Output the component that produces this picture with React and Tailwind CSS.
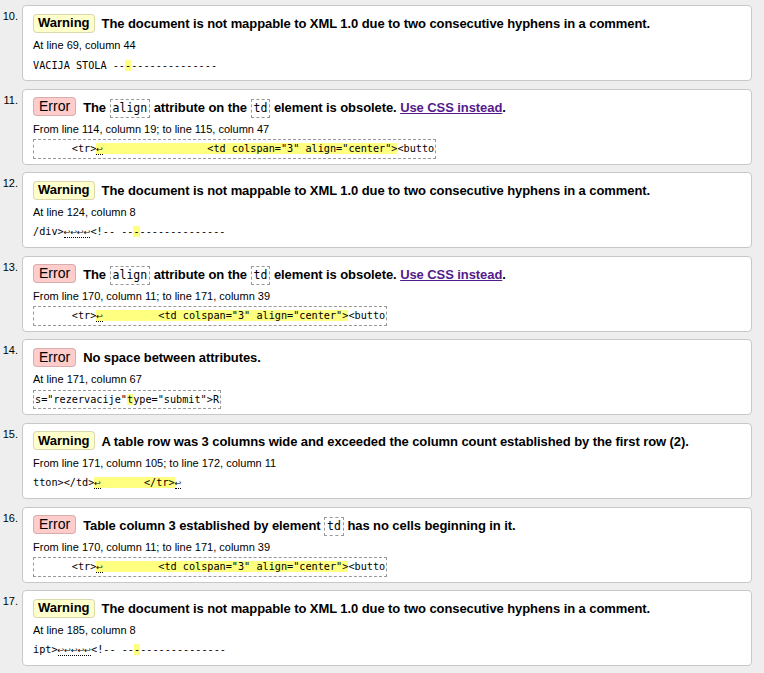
import React from 'react';

const sans = { fontFamily: '"Liberation Sans", Arial, sans-serif' };
const mono = { fontFamily: '"DejaVu Sans Mono", "Liberation Mono", monospace' };
const arrowFont = { fontFamily: '"DejaVu Sans", sans-serif' };

const xmlTitle = ['The document is not mappable to XML 1.0 due to two consecutive hyphens in a comment.'];
const alignTitle = [
  'The ',
  { code: 'align' },
  ' attribute on the ',
  { code: 'td' },
  ' element is obsolete. ',
  { link: 'Use CSS instead' },
  '.',
];
const dashes = '--------------';
const tdRow = (n) => ['      <tr>', { hl: '↩' + ' '.repeat(n) + '<td colspan="3" align="center">' }, '<butto'];

const messages = [
  { n: 10, type: 'Warning', title: xmlTitle, loc: 'At line 69, column 44', extract: ['VACIJA STOLA --', { hl: '-' }, dashes] },
  { n: 11, type: 'Error', title: alignTitle, loc: 'From line 114, column 19; to line 115, column 47', extract: tdRow(17) },
  { n: 12, type: 'Warning', title: xmlTitle, loc: 'At line 124, column 8', extract: ['/div>↩↩↩↩<!-- --', { hl: '-' }, dashes] },
  { n: 13, type: 'Error', title: alignTitle, loc: 'From line 170, column 11; to line 171, column 39', extract: tdRow(9) },
  { n: 14, type: 'Error', title: ['No space between attributes.'], loc: 'At line 171, column 67', extract: ['s="rezervacije"', { hl: 't' }, 'ype="submit">R'] },
  {
    n: 15,
    type: 'Warning',
    title: ['A table row was 3 columns wide and exceeded the column count established by the first row (2).'],
    loc: 'From line 171, column 105; to line 172, column 11',
    extract: ['tton></td>', { hl: '↩       </tr>' }, '↩'],
  },
  {
    n: 16,
    type: 'Error',
    title: ['Table column 3 established by element ', { code: 'td' }, ' has no cells beginning in it.'],
    loc: 'From line 170, column 11; to line 171, column 39',
    extract: tdRow(9),
  },
  { n: 17, type: 'Warning', title: xmlTitle, loc: 'At line 185, column 8', extract: ['ipt>↩↩↩↩↩<!-- --', { hl: '-' }, dashes] },
];

// line breaks get a dotted underline, like the validator does
function withBreaks(str, key) {
  const parts = str.split(/(↩+)/).filter(Boolean);
  return parts.map((p, i) =>
    p[0] === '↩' ? (
      <span key={key + '-' + i} style={arrowFont} className="border-b border-dotted border-black text-[8px]">
        {p}
      </span>
    ) : (
      <span key={key + '-' + i}>{p}</span>
    )
  );
}

function Title({ parts }) {
  return (
    <span className="text-[13px] font-bold tracking-[-0.08px] text-black">
      {parts.map((p, i) => {
        if (typeof p === 'string') return <span key={i}>{p}</span>;
        if (p.code)
          return (
            <code
              key={i}
              style={mono}
              className="inline-block border border-dashed border-[#999] px-[2px] text-[11.5px] font-normal leading-[17px] tracking-normal"
            >
              {p.code}
            </code>
          );
        return (
          <a key={i} href="#" className="text-[#551a8b] underline">
            {p.link}
          </a>
        );
      })}
    </span>
  );
}

function Extract({ parts, boxed }) {
  return (
    <code
      style={mono}
      className={
        'inline-block whitespace-pre text-[10.2px] leading-[17px] text-black ' +
        (boxed ? 'border border-dashed border-[#999] px-[1px]' : '')
      }
    >
      {parts.map((p, i) =>
        typeof p === 'string' ? (
          withBreaks(p, i)
        ) : (
          <span key={i} className="bg-[#ffff80]">
            {withBreaks(p.hl, 'h' + i)}
          </span>
        )
      )}
    </code>
  );
}

function Message({ m }) {
  const isError = m.type === 'Error';
  return (
    <div className="flex">
      <div className="w-[22px] shrink-0 pr-[4px] pt-[6px] text-right text-[11px] leading-[11px] text-black">
        {m.n}.
      </div>
      <div className="mr-[12px] flex-1 rounded-[4px] border border-[#c8c8c8] bg-white pb-[6px] pl-[10px] pt-[5px]">
        <div className="flex h-[24px] items-center">
          <span
            className={
              'inline-flex h-[19px] shrink-0 items-center rounded-[4px] border border-black/15 text-black ' +
              (isError ? 'bg-[#ffcccc] px-[5px] text-[14px] font-normal' : 'bg-[#ffffcc] px-[4px] text-[13px] font-bold')
            }
          >
            {m.type}
          </span>
          <span className="ml-[7px] whitespace-nowrap">
            <Title parts={m.title} />
          </span>
        </div>
        <div className="mt-[1px] h-[18px] text-[11px] leading-[18px] text-black">{m.loc}</div>
        <div className="mt-[2px] flex h-[18px] items-center">
          <Extract parts={m.extract} boxed={isError} />
        </div>
      </div>
    </div>
  );
}

export default function App() {
  return (
    <div style={sans} className="min-h-screen bg-[#eeeeee] pt-[5px]">
      <div className="flex flex-col gap-[7.6px]">
        {messages.map((m) => (
          <Message key={m.n} m={m} />
        ))}
      </div>
    </div>
  );
}
